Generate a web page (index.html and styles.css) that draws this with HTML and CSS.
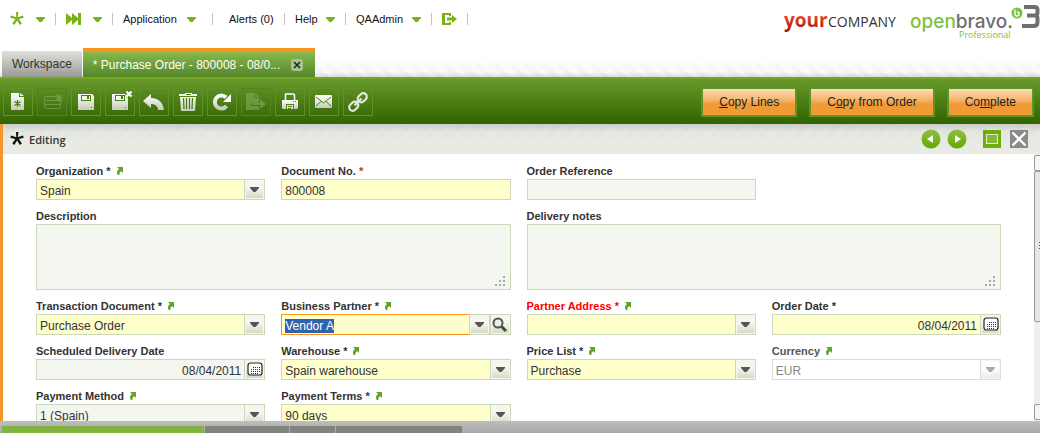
FILE: index.html
```html
<!DOCTYPE html>
<html lang="en">
<head>
  <meta charset="UTF-8">
  <meta name="viewport" content="width=device-width, initial-scale=1.0">
  <title>Purchase Order</title>
  <link rel="stylesheet" href="styles.css">
</head>
<body>
  <!-- shared icons -->
  <svg class="sprite" width="0" height="0" aria-hidden="true">
    <defs>
      <linearGradient id="silver" x1="0" y1="0" x2="0" y2="1">
        <stop offset="0" stop-color="#fff"/>
        <stop offset="1" stop-color="#c4ccbc"/>
      </linearGradient>
      <linearGradient id="green" x1="0" y1="0" x2="0" y2="1">
        <stop offset="0" stop-color="#8cc142"/>
        <stop offset="1" stop-color="#68a800"/>
      </linearGradient>
      <linearGradient id="red" x1="0" y1="0" x2="0" y2="1">
        <stop offset="0.2" stop-color="#ee5a3c"/>
        <stop offset="0.9" stop-color="#a81608"/>
      </linearGradient>
    </defs>
    <symbol id="down" viewBox="0 0 9 5"><path d="M0 0h9v1L5.500 5h-2L0 1z"/></symbol>
    <symbol id="star" viewBox="0 0 14 14"><path d="M6 0h2.400l-.6 5.200L13 3.600l.7 2.200-4.800 1.100 3 4.700-2 1.400L7.100 8.500 4.300 13l-2-1.400 3-4.700L.3 5.800 1 3.600l5.300 1.600z"/></symbol>
    <symbol id="jump" viewBox="0 0 7 8"><path d="M1 0h6v6L5.400 4.300C3.800 4.800 3.200 6 3.500 8H1.800C.2 5.500 1 3.400 3 2z"/></symbol>
    <symbol id="cal" viewBox="0 0 16 15">
      <rect x="1" y="1" width="14" height="12" rx="2.500" fill="#fff" stroke="#222" stroke-width="1.200"/>
      <path d="M6 5.500h7M4 7.500h9M4 9.500h9M4 11.500h7" stroke="#333" stroke-dasharray="1 1"/>
    </symbol>
    <symbol id="grip" viewBox="0 0 11 11"><path fill="#aaa" d="M8 0h2v2H8zM4 4h2v2H4zM8 4h2v2H8zM0 8h2v2H0zM4 8h2v2H4zM8 8h2v2H8z"/></symbol>
  </svg>

  <header class="topbar">
    <nav class="menu">
      <button class="menu-item m-new" aria-label="Quick create"><svg class="star-icon"><use href="#star"/></svg><svg class="down"><use href="#down"/></svg></button>
      <button class="menu-item m-launch" aria-label="Quick launch"><svg width="15" height="12" viewBox="0 0 15 12"><path d="M0 0l6 5V0l6 5V0h3v12h-3V7l-6 5V7l-6 5z"/></svg><svg class="down"><use href="#down"/></svg></button>
      <button class="menu-item m-app">Application<svg class="down"><use href="#down"/></svg></button>
      <button class="menu-item m-alerts">Alerts (0)</button>
      <button class="menu-item m-help">Help<svg class="down"><use href="#down"/></svg></button>
      <button class="menu-item m-user">QAAdmin<svg class="down"><use href="#down"/></svg></button>
      <button class="menu-item m-exit" aria-label="Log out"><svg width="15" height="12" viewBox="0 0 15 12"><path d="M0 0h9v3H7V2H3v8h4V9h2v3H0zM5 4.500h5V2l5 4-5 4V7.500H5z"/></svg></button>
    </nav>
    <div class="logos">
      <svg width="114" height="40" viewBox="0 0 114 40" role="img" aria-label="yourCOMPANY">
        <text x="0" y="27" class="logo-your">your</text>
        <text x="44" y="27" class="logo-company">COMPANY</text>
      </svg>
      <svg width="130" height="46" viewBox="0 0 130 46" role="img" aria-label="openbravo 3 Professional">
        <text x="0" y="28" class="logo-ob"><tspan fill="#7cc242">open</tspan><tspan fill="#6d6f71">bravo.</tspan></text>
        <text x="49" y="38" class="logo-pro">Professional</text>
        <circle cx="107" cy="13" r="5.500" fill="#7cc242"/>
        <path d="M105 9.500v4.500a2 2 0 1 0 2-2" fill="none" stroke="#fff" stroke-width="1.300"/>
        <path d="M114 7h10.500q3 0 3 3v2.500q0 3-3 3H117h7.500q3 0 3 3V22q0 4-4 4H112" fill="none" stroke="#6d6f71" stroke-width="4"/>
      </svg>
    </div>
  </header>

  <div class="tabs">
    <button class="tab">Workspace</button>
    <div class="tab tab-active">
      <span>* Purchase Order - 800008 - 08/0...</span>
      <button class="tab-close" aria-label="Close tab"><svg width="8" height="8" viewBox="0 0 8 8"><path d="M1 1l6 6M7 1L1 7" stroke="#222" stroke-width="1.600"/></svg></button>
    </div>
  </div>

  <div class="toolbar">
    <div class="tools">
      <button class="tool" aria-label="New"><svg viewBox="0 0 28 26"><path fill="url(#silver)" d="M7 4h8v4h5v13H7zM16 4l4 3h-4z"/><path d="M13.500 11v7M10.500 12.500l6 4M16.500 12.500l-6 4" stroke="#477d10" stroke-width="1.200"/></svg></button>
      <button class="tool tool-off" aria-label="New in grid" disabled><svg viewBox="0 0 28 26"><g fill="none" stroke="#8fb66a"><rect x="6.500" y="7.500" width="16" height="12" rx="1"/><path d="M6 11.500h16M6 15.500h16"/><path d="M21 5v8M17 9h8M18 6l6 6M24 6l-6 6" stroke-width="1.200"/></g></svg></button>
      <button class="tool" aria-label="Save"><svg viewBox="0 0 28 26"><path fill="url(#silver)" d="M6 5h14l2 2v14H6z"/><path fill="#4a8212" d="M9 6h10v6H9z"/><path fill="#f4f7f0" d="M10 7h8v4h-8z"/><path fill="#4a8212" d="M15 7h2v3h-2zM19 18h1v1h-1z"/></svg></button>
      <button class="tool" aria-label="Save and close"><svg viewBox="0 0 28 26"><path fill="url(#silver)" d="M6 5h14l2 2v14H6z"/><path fill="#4a8212" d="M9 6h10v6H9z"/><path fill="#f4f7f0" d="M10 7h8v4h-8z"/><path fill="#4a8212" d="M15 7h2v3h-2zM19 18h1v1h-1z"/><path d="M20.500 2.500l5 5M25.500 2.500l-5 5" stroke="#4a8212" stroke-width="4"/><path d="M20.500 2.500l5 5M25.500 2.500l-5 5" stroke="#fff" stroke-width="2.400"/></svg></button>
      <button class="tool" aria-label="Undo"><svg viewBox="0 0 28 26"><path fill="url(#silver)" d="M3 12l8-7v4c7 0 12 4 13 12h-6c0-4-3-6-7-6v4z"/></svg></button>
      <button class="tool" aria-label="Delete"><svg viewBox="0 0 28 26"><path fill="url(#silver)" d="M5 5h6V4h7v1h5v2H5zM6 8h16l-1 14H7z"/><path d="M9.500 9l.5 11M12.500 9v11M15.500 9v11M18.500 9l-.5 11M12 5.500h5" stroke="#477d10" stroke-width="1.200"/></svg></button>
      <button class="tool" aria-label="Refresh"><svg viewBox="0 0 28 26"><path d="M18.500 17A6.500 6.500 0 1 1 18 8.500" fill="none" stroke="url(#silver)" stroke-width="4"/><path fill="#fff" d="M23 5v8h-8z"/></svg></button>
      <button class="tool tool-off" aria-label="Export" disabled><svg viewBox="0 0 28 26"><path fill="#8fb66a" d="M4 4h8v5h5v5H9v3h8v4H4zM13 4l4 4h-4zM10 14h8v-4l6 5-6 5v-4h-8z"/></svg></button>
      <button class="tool" aria-label="Print"><svg viewBox="0 0 28 26"><path d="M9.500 12V5h8l1 1v6" fill="none" stroke="#fff" stroke-width="1.500"/><path fill="url(#silver)" d="M6 11h16v8l-1 1H7l-1-1z"/><path fill="#4a8212" d="M10 15h8v6h-8zM17 12h1v1h-1zM19 12h1v1h-1z"/><path fill="#dde4d6" d="M11 16h6v4h-6z"/><path fill="#4a8212" d="M12 17h4v1h-4zM12 19h3v1h-3z"/></svg></button>
      <button class="tool" aria-label="Email"><svg viewBox="0 0 28 26"><rect x="5" y="6" width="17" height="13" rx="1" fill="url(#silver)"/><path d="M6 8l7.500 6L21 8M6 17l5-4.500M21 17l-5-4.500" fill="none" stroke="#4a8212"/></svg></button>
      <button class="tool" aria-label="Attachments"><svg viewBox="0 0 28 26"><g fill="none" stroke="#e4e9df" stroke-width="2.200" transform="rotate(-45 14 13)"><rect x="3" y="9.500" width="10" height="7" rx="3.500"/><rect x="15" y="9.500" width="10" height="7" rx="3.500"/><path d="M9 13h10"/></g></svg></button>
    </div>
    <div class="actions">
      <button class="action"><u>C</u>opy Lines</button>
      <button class="action">C<u>o</u>py from Order</button>
      <button class="action">Co<u>m</u>plete</button>
    </div>
  </div>

  <main class="view">
    <div class="status">
      <svg class="star-icon status-star"><use href="#star"/></svg>
      <span class="status-text">Editing</span>
      <div class="status-tools">
        <button aria-label="Previous"><svg width="20" height="20" viewBox="0 0 20 20"><circle cx="10" cy="10" r="9.500" fill="url(#green)"/><path fill="#fff" d="M12 6v8l-6-4z"/></svg></button>
        <button aria-label="Next"><svg width="20" height="20" viewBox="0 0 20 20"><circle cx="10" cy="10" r="9.500" fill="url(#green)"/><path fill="#fff" d="M8 6v8l6-4z"/></svg></button>
        <button class="restore" aria-label="Restore"><svg width="18" height="18" viewBox="0 0 18 18"><path fill="#6fae0b" d="M0 0h18v18H0z"/><rect x="3.500" y="4.500" width="11" height="9" fill="#82b93a" stroke="#dff0c4"/></svg></button>
        <button aria-label="Close"><svg width="18" height="18" viewBox="0 0 18 18"><path fill="#8a8a8a" d="M0 0h18v18H0z"/><path d="M2.500 2.500l13 13M15.500 2.500l-13 13" stroke="#fff" stroke-width="2.400"/></svg></button>
      </div>
    </div>

    <div class="scroller">
      <form class="form">
        <div class="field">
          <div class="caption"><label for="org">Organization <i>*</i></label><a href="#org" aria-label="Open organization"><svg><use href="#jump"/></svg></a></div>
          <div class="box"><select id="org" class="required"><option>Spain</option></select><span class="picker"><svg class="down"><use href="#down"/></svg></span></div>
        </div>
        <div class="field">
          <div class="caption"><label for="docno">Document No. <i class="orange">*</i></label></div>
          <div class="box"><input id="docno" class="required" type="text" value="800008"></div>
        </div>
        <div class="field">
          <div class="caption"><label for="ref">Order Reference</label></div>
          <div class="box"><input id="ref" type="text"></div>
        </div>

        <div class="field wide first">
          <div class="caption"><label for="desc">Description</label></div>
          <div class="box area"><textarea id="desc"></textarea><svg class="grip"><use href="#grip"/></svg></div>
        </div>
        <div class="field wide">
          <div class="caption"><label for="notes">Delivery notes</label></div>
          <div class="box area"><textarea id="notes"></textarea><svg class="grip"><use href="#grip"/></svg></div>
        </div>

        <div class="field">
          <div class="caption"><label for="doctype">Transaction Document <i>*</i></label><a href="#doctype" aria-label="Open transaction document"><svg><use href="#jump"/></svg></a></div>
          <div class="box"><select id="doctype" class="required"><option>Purchase Order</option></select><span class="picker"><svg class="down"><use href="#down"/></svg></span></div>
        </div>
        <div class="field">
          <div class="caption"><label for="partner">Business Partner <i>*</i></label><a href="#partner" aria-label="Open business partner"><svg><use href="#jump"/></svg></a></div>
          <div class="box"><input id="partner" class="required focused" type="text" value="Vendor A"><button type="button" class="side" aria-label="Show list"><svg class="down"><use href="#down"/></svg></button><button type="button" class="side" aria-label="Search"><svg width="16" height="16" viewBox="0 0 16 16"><path d="M9.500 9.500l4.500 4.500" stroke="#444" stroke-width="3"/><circle cx="6" cy="6" r="4.500" fill="#e8eeea" stroke="#555" stroke-width="2"/></svg></button></div>
        </div>
        <div class="field">
          <div class="caption error"><label for="address">Partner Address <i>*</i></label><a href="#address" aria-label="Open partner address"><svg><use href="#jump"/></svg></a></div>
          <div class="box"><select id="address" class="required"><option></option></select><span class="picker"><svg class="down"><use href="#down"/></svg></span></div>
        </div>
        <div class="field">
          <div class="caption"><label for="date">Order Date <i>*</i></label></div>
          <div class="box"><input id="date" class="required date" type="text" value="08/04/2011"><button type="button" class="side" aria-label="Pick date"><svg width="16" height="15"><use href="#cal"/></svg></button></div>
        </div>

        <div class="field">
          <div class="caption"><label for="delivery">Scheduled Delivery Date</label></div>
          <div class="box"><input id="delivery" class="date" type="text" value="08/04/2011"><button type="button" class="side" aria-label="Pick date"><svg width="16" height="15"><use href="#cal"/></svg></button></div>
        </div>
        <div class="field">
          <div class="caption"><label for="warehouse">Warehouse <i>*</i></label><a href="#warehouse" aria-label="Open warehouse"><svg><use href="#jump"/></svg></a></div>
          <div class="box"><select id="warehouse" class="required"><option>Spain warehouse</option></select><span class="picker"><svg class="down"><use href="#down"/></svg></span></div>
        </div>
        <div class="field">
          <div class="caption"><label for="pricelist">Price List <i>*</i></label><a href="#pricelist" aria-label="Open price list"><svg><use href="#jump"/></svg></a></div>
          <div class="box"><select id="pricelist" class="required"><option>Purchase</option></select><span class="picker"><svg class="down"><use href="#down"/></svg></span></div>
        </div>
        <div class="field off">
          <div class="caption"><label for="currency">Currency</label><a href="#currency" aria-label="Open currency"><svg><use href="#jump"/></svg></a></div>
          <div class="box"><select id="currency" disabled><option>EUR</option></select><span class="picker"><svg class="down"><use href="#down"/></svg></span></div>
        </div>

        <div class="field">
          <div class="caption"><label for="method">Payment Method</label><a href="#method" aria-label="Open payment method"><svg><use href="#jump"/></svg></a></div>
          <div class="box"><select id="method"><option>1 (Spain)</option></select><span class="picker"><svg class="down"><use href="#down"/></svg></span></div>
        </div>
        <div class="field">
          <div class="caption"><label for="terms">Payment Terms <i>*</i></label><a href="#terms" aria-label="Open payment terms"><svg><use href="#jump"/></svg></a></div>
          <div class="box"><select id="terms" class="required"><option>90 days</option></select><span class="picker"><svg class="down"><use href="#down"/></svg></span></div>
        </div>
      </form>
      <div class="scrollbar">
        <div class="scroll-btn"></div>
        <div class="scroll-thumb"></div>
        <div class="scroll-btn scroll-end"></div>
      </div>
    </div>
  </main>

  <footer class="child-tabs">
    <div class="child child-on"></div>
    <div class="child child-b"></div>
    <div class="child child-c"></div>
    <div class="child child-d"></div>
  </footer>

  <script>
    const partner = document.getElementById('partner');
    partner.focus();
    partner.select();
  </script>
</body>
</html>
```

FILE: styles.css
```css
* {
  box-sizing: border-box;
}

body {
  margin: 0;
  height: 100vh;
  display: flex;
  flex-direction: column;
  overflow: hidden;
  background: #fff;
  color: #333;
  font-family: "Liberation Sans", Arial, sans-serif;
  font-size: 12px;
}

button, input, select, textarea {
  font: inherit;
  color: inherit;
  margin: 0;
  padding: 0;
  border: 0;
  border-radius: 0;
  background: none;
}

svg {
  display: block;
  flex: none;
}

.sprite {
  position: absolute;
}

.down {
  width: 9px;
  height: 5px;
}

.star-icon {
  width: 14px;
  height: 14px;
}

/* Top menu */
.topbar {
  display: flex;
  justify-content: space-between;
  height: 48px;
  flex: none;
}

.menu {
  display: flex;
  padding-top: 13px;
  height: 25px;
}

.menu-item {
  display: flex;
  align-items: center;
  justify-content: space-between;
  height: 12px;
  padding: 0 10px;
  border-right: 1px solid #c4c4c4;
  color: #111;
  font-size: 11px;
  fill: #7ab317;
}

.m-new {
  width: 56px;
}

.m-launch {
  width: 57px;
}

.m-app {
  width: 100px;
  padding-right: 16px;
}

.m-alerts {
  width: 72px;
  padding-left: 16px;
}

.m-help {
  width: 61px;
}

.m-user {
  width: 86px;
}

.m-exit {
  width: 36px;
}

.logos {
  display: flex;
  gap: 12px;
}

.logo-your {
  font: bold 19px "Open Sans", sans-serif;
  fill: url(#red);
}

.logo-company {
  font: 14px "Open Sans", sans-serif;
  fill: #333;
}

.logo-ob {
  font: 500 19px Inter, sans-serif;
}

.logo-pro {
  font: 9px "Open Sans", sans-serif;
  fill: #7cc242;
}

/* Window tabs */
.tabs {
  display: flex;
  align-items: flex-end;
  gap: 1px;
  height: 31px;
  flex: none;
  padding-left: 2px;
  border-bottom: 2px solid #74a823;
  background: linear-gradient(#fff 9px, rgba(255, 255, 255, 0.5) 24px, rgba(200, 200, 206, 0.5)), repeating-linear-gradient(45deg, #fff 0 1px, #ddd 1px 2px);
}

.tab {
  height: 26px;
  padding: 0 10px;
  background: linear-gradient(#dfe2dc, #999b93);
  color: #333;
}

.tab-active {
  display: flex;
  align-items: center;
  gap: 11px;
  height: 29px;
  border-top: 4px solid #f7941d;
  background: linear-gradient(#8ab84c, #54862a);
  color: #fff;
}

.tab-close {
  display: flex;
  align-items: center;
  justify-content: center;
  width: 12px;
  height: 12px;
  margin-right: 2px;
  border-radius: 3px;
  background: #a5c58a;
}

/* Toolbar */
.toolbar {
  display: flex;
  align-items: center;
  justify-content: space-between;
  height: 45px;
  flex: none;
  padding: 0 6px 0 3px;
  background: linear-gradient(#68982a, #306400);
}

.tools {
  display: flex;
  gap: 4px;
}

.tool {
  width: 30px;
  height: 28px;
  border: 1px solid #5f9228;
}

.tool svg {
  width: 28px;
  height: 26px;
}

.tool-off {
  border-color: #528420;
}

.tool-off svg {
  opacity: 0.5;
}

.actions {
  display: flex;
  gap: 12px;
}

.action {
  height: 30px;
  padding: 0 16px;
  border: 2px solid #5f9623;
  background: linear-gradient(#fbdcb6, #f5b56c 11px, #f09a36 15px, #f09a36);
  color: #222;
}

/* Form status bar */
.view {
  display: flex;
  flex-direction: column;
  flex: 1;
  min-height: 0;
  border-left: 3px solid #f7952b;
}

.status {
  display: flex;
  align-items: center;
  gap: 5px;
  height: 30px;
  flex: none;
  padding: 0 12px 0 7px;
  background: linear-gradient(rgba(190, 190, 190, 0.6), rgba(232, 235, 228, 0.6) 8px, #e8ebe4 20px), repeating-linear-gradient(135deg, #e8ebe4 0 1px, #d3d6d0 1px 2px);
}

.status-star {
  fill: #111;
}

.status-text {
  flex: 1;
  font: 600 11px "Open Sans", sans-serif;
}

.status-tools {
  display: flex;
  align-items: center;
  gap: 6px;
}

.restore {
  margin: 0 3px 0 10px;
}

/* Form */
.scroller {
  display: flex;
  flex: 1;
  min-height: 0;
  overflow: hidden;
}

.form {
  display: grid;
  grid-template-columns: repeat(4, 1fr);
  align-content: start;
  column-gap: 16px;
  flex: 1;
  padding: 1px 33px 0;
}

.field {
  min-width: 0;
}

.wide {
  grid-column: span 2;
}

.first {
  grid-column: 1 / span 2;
}

.caption {
  display: flex;
  align-items: center;
  gap: 5px;
  padding-top: 8px;
  height: 24px;
  font-size: 11px;
  font-weight: bold;
  line-height: 16px;
}

.caption i {
  font-style: normal;
}

.caption .orange {
  color: #a64b00;
}

.caption svg {
  width: 7px;
  height: 8px;
  fill: #5da32c;
}

.error {
  color: #f00;
}

.box {
  display: flex;
  position: relative;
  height: 21px;
}

.area {
  height: 66px;
}

.box input,
.box select,
.box textarea {
  flex: 1;
  min-width: 0;
  padding: 2px 3px 0;
  border: 1px solid #cdd7bb;
  background: #f4f7f0;
  outline: none;
  appearance: none;
  resize: none;
}

.box .required {
  background: #ffffcc;
}

.box .focused {
  border-color: #f7941d;
  border-right: 0;
}

.box .date {
  text-align: right;
  border-right: 0;
}

.focused::selection {
  background: #3163ae;
  color: #fff;
}

.picker,
.side {
  display: flex;
  align-items: center;
  justify-content: center;
  width: 21px;
  height: 21px;
  border: 1px solid #cdd7bb;
  background: linear-gradient(#f5f6f0 40%, #d3d8c2);
  box-shadow: inset 0 0 0 1px #f4f7ee;
  fill: #555;
}

/* sits over the end of the select */
.picker {
  position: absolute;
  top: 0;
  right: 0;
  pointer-events: none;
}

.grip {
  position: absolute;
  right: 5px;
  bottom: 3px;
  width: 11px;
  height: 11px;
}

.off {
  color: #666;
}

.off label {
  color: #555;
}

.box select:disabled {
  border-color: #ddd;
  background: #fff;
  color: #888;
  opacity: 1;
}

.off .picker {
  border-color: #ddd;
  background: linear-gradient(#fff 40%, #e8e8e8);
  fill: #aaa;
}

/* Scrollbar */
.scrollbar {
  display: flex;
  flex-direction: column;
  width: 6px;
  padding: 1px 0;
  overflow: hidden;
  background: #eee;
}

.scroll-btn {
  width: 17px;
  height: 16px;
  flex: none;
  border: 1px solid #999;
  border-radius: 2px;
  background: #f4f4f4;
}

.scroll-thumb {
  width: 17px;
  height: 151px;
  border: 1px solid #999;
  border-radius: 2px;
  background: repeating-linear-gradient(#555 0 1px, transparent 1px 3px) 4px 70px / 8px 8px no-repeat, #e6e6e6;
}

.scroll-end {
  margin-top: auto;
}

/* Child tabs */
.child-tabs {
  display: flex;
  gap: 1px;
  height: 12px;
  flex: none;
  padding: 5px 0 0 2px;
  background: linear-gradient(#bdbdbd, #a8a8a8);
}

.child {
  background: #81837e;
}

.child-on {
  width: 202px;
  background: #82b340;
}

.child-b {
  width: 84px;
}

.child-c {
  width: 45px;
}

.child-d {
  width: 126px;
}
```
